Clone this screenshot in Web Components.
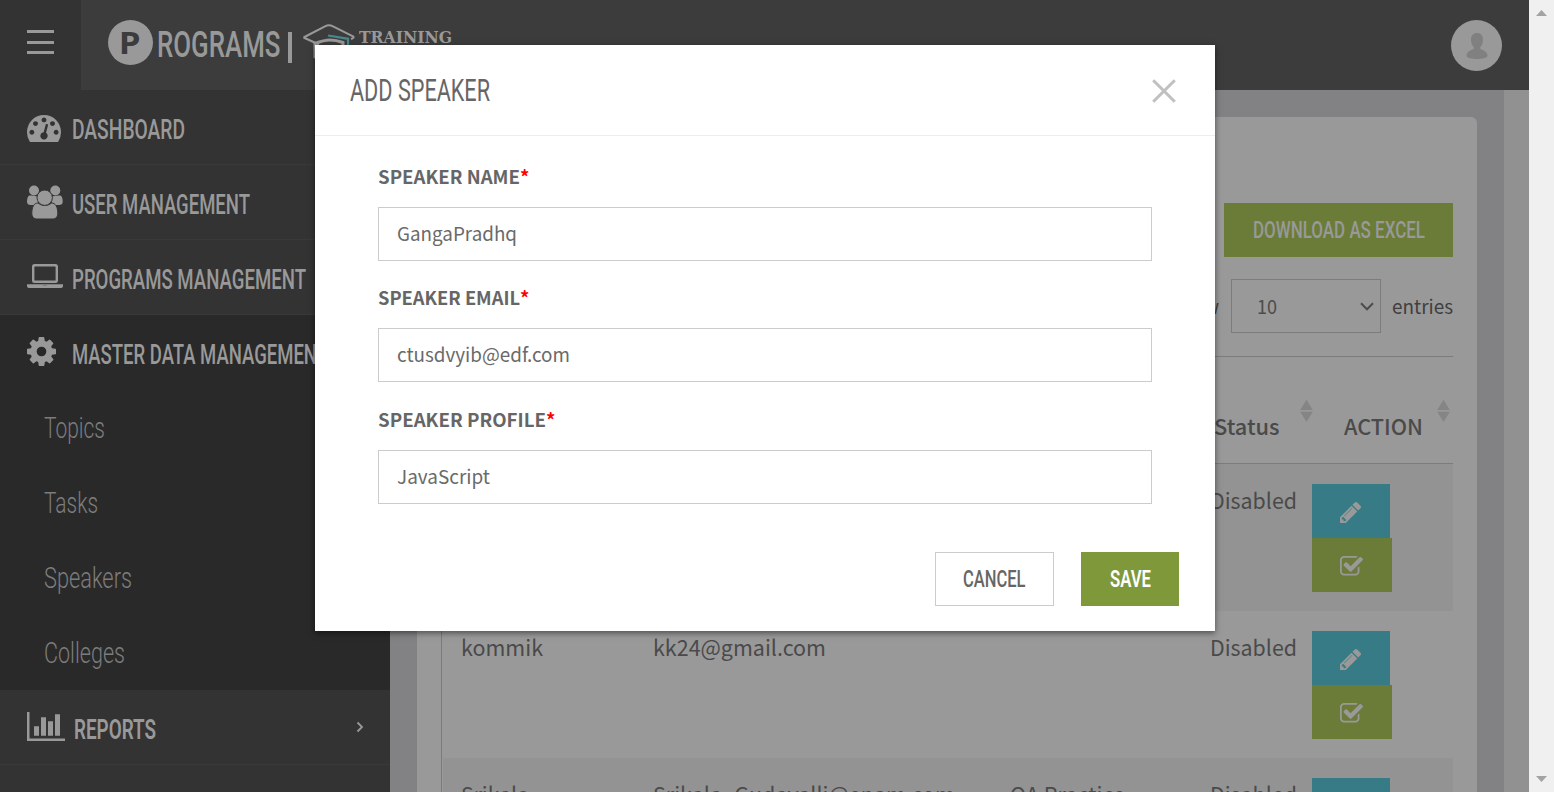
<!DOCTYPE html>
<html lang="en">
<head>
<meta charset="utf-8">
<title>Programs | Speakers</title>
<style>
html,body{margin:0;height:100%;overflow:hidden;background:#828284}
body{font-family:"Noto Sans CJK SC","Open Sans",sans-serif;color:#4a4a4a}
</style>
</head>
<body>
<programs-app></programs-app>
<script>
const define=(name,html,init)=>{
  const t=document.createElement('template');t.innerHTML=html;
  customElements.define(name,class extends HTMLElement{
    constructor(){super();this.attachShadow({mode:'open'}).append(t.content.cloneNode(true));}
    connectedCallback(){if(init)init(this,this.shadowRoot);}
  });
};
const COG='M1152 896q0-106-75-181t-181-75-181 75-75 181 75 181 181 75 181-75 75-181zm512-109v222q0 12-8 23t-20 13l-185 28q-19 54-39 91 35 50 107 138 10 12 10 25t-9 23q-27 37-99 108t-94 71q-12 0-26-9l-138-108q-44 23-91 38-16 136-29 186-7 28-36 28h-222q-14 0-24.5-8.5t-11.5-21.5l-28-184q-49-16-90-37l-141 107q-10 9-25 9-14 0-25-11-126-114-165-168-7-10-7-23 0-12 8-23 15-21 51-66.5t54-70.5q-27-50-41-99l-183-27q-13-2-21-12.5t-8-23.5v-222q0-12 8-23t19-13l186-28q14-46 39-92-40-57-107-138-10-12-10-24 0-10 9-23 26-36 98.5-107.5t94.5-71.5q13 0 26 10l138 107q44-23 91-38 16-136 29-186 7-28 36-28h222q14 0 24.5 8.5t11.5 21.5l28 184q49 16 90 37l142-107q9-9 24-9 13 0 25 10 129 119 165 170 7 8 7 22 0 12-8 23-15 21-51 66.5t-54 70.5q26 50 41 98l183 28q13 2 21 12.5t8 23.5z';
const DASH='M384 1152q0-53-37.5-90.5t-90.5-37.5-90.5 37.5-37.5 90.5 37.5 90.5 90.5 37.5 90.5-37.5 37.5-90.5zm192-448q0-53-37.5-90.5t-90.5-37.5-90.5 37.5-37.5 90.5 37.5 90.5 90.5 37.5 90.5-37.5 37.5-90.5zm428 481l101-382q6-26-7.5-48.5t-38.5-29.5-48 6.5-30 39.5l-101 382q-60 5-107 43.5t-63 98.5q-20 77 20 146t117 89 146-20 89-117q16-60-6-117t-72-91zm660-33q0-53-37.5-90.5t-90.5-37.5-90.5 37.5-37.5 90.5 37.5 90.5 90.5 37.5 90.5-37.5 37.5-90.5zm-640-640q0-53-37.5-90.5t-90.5-37.5-90.5 37.5-37.5 90.5 37.5 90.5 90.5 37.5 90.5-37.5 37.5-90.5zm448 192q0-53-37.5-90.5t-90.5-37.5-90.5 37.5-37.5 90.5 37.5 90.5 90.5 37.5 90.5-37.5 37.5-90.5zm320 448q0 261-141 483-19 29-54 29h-1402q-35 0-54-29-141-221-141-483 0-182 71-348t191-286 286-191 348-71 348 71 286 191 191 286 71 348z';
const PENCIL='M491 1536l91-91-235-235-91 91v107h128v128h107zm523-928q0-22-22-22-10 0-17 7l-542 542q-7 7-7 17 0 22 22 22 10 0 17-7l542-542q7-7 7-17zm-54-192l416 416-832 832h-416v-416zm683 96q0 53-37 90l-166 166-416-416 166-165q36-38 90-38 53 0 91 38l235 234q37 39 37 91z';
const CHECK='M1472 930v318q0 119-84.5 203.5t-203.5 84.5h-832q-119 0-203.5-84.5t-84.5-203.5v-832q0-119 84.5-203.5t203.5-84.5h832q63 0 117 25 15 7 18 23 3 17-9 29l-49 49q-10 10-23 10-3 0-9-2-23-6-45-6h-832q-66 0-113 47t-47 113v832q0 66 47 113t113 47h832q66 0 113-47t47-113v-254q0-13 9-22l64-64q10-10 23-10 6 0 12 3 20 8 20 29zm231-489l-814 814q-24 24-57 24t-57-24l-430-430q-24-24-24-57t24-57l110-110q24-24 57-24t57 24l263 263 647-647q24-24 57-24t57 24l110 110q24 24 24 57t-24 57z';
// name: [width, height, viewBox, content]
const ICONS={
  dashboard:[34,27,'0 256 1792 1408',`<path d="${DASH}"/>`],
  users:[36,34,'0 0 36 34','<circle cx="7" cy="5.5" r="5"/><circle cx="28.3" cy="5.5" r="5"/><path d="M3 10.500C1 10.500 0 13 0 17c0 2 1.500 3 3.500 3H11V11.500C9 11.500 8 10.500 3 10.500zM32.700 10.500c2 0 3 2.500 3 6.500 0 2-1.500 3-3.500 3H25V11.500c2 0 3-1 7.700-1z"/><path d="M11 18c-4 0-6.200 4-6.200 10.500 0 3.500 2 5.500 5 5.500h16c3 0 5-2 5-5.500C30.800 22 28.500 18 24.500 18c-2 1.600-4 2.400-6.700 2.400S13 19.600 11 18z" stroke="#333" stroke-width="1"/><circle cx="17.700" cy="12.700" r="7.700" stroke="#333" stroke-width="1"/>'],
  laptop:[36,24,'0 0 36 24','<path fill-rule="evenodd" d="M7.500 0h21Q31 0 31 2.500v14q0 2.500-2.500 2.500h-21Q5 19 5 16.500v-14Q5 0 7.500 0zM8 2.500q-.6 0-.6.600v12.800q0 .6.6.600h20q.6 0 .6-.6V3.100q0-.6-.6-.6z"/><path d="M0 20.300h36v1.700q0 2-3 2H3q-3 0-3-2z"/><path d="M16 21.200h4v.8h-4z" fill="#777"/>'],
  cog:[29,29,'128 128 1536 1536',`<path d="${COG}"/>`],
  chart:[38,29,'0 0 38 29','<path d="M0 0h2.500v26.400H38V29H0zM7 14.300h5v9.500H7zM14 5.300h5v18.500h-5zM21 9.300h5v14.500h-5zM28 2.300h5v21.500h-5z"/>'],
  pencil:[21,21,'128 149 1515 1515',`<path d="${PENCIL}"/>`],
  check:[23,19.500,'64 128 1663 1408',`<path d="${CHECK}"/>`],
  chevron:[8,12,'0 0 8 12','<path d="M1.500 1.500 6 6l-4.500 4.500" fill="none" stroke="currentColor" stroke-width="1.800"/>'],
  down:[14,9,'0 0 14 9','<path d="M1 1.300 7 7.300l6-6" fill="none" stroke="currentColor" stroke-width="2"/>'],
  close:[24,24,'0 0 24 24','<path d="M1.200 1.200 22.800 22.800M22.800 1.200 1.200 22.800" fill="none" stroke="currentColor" stroke-width="3"/>'],
  sort:[13,24,'0 0 13 24','<path d="M6.500.800 12.800 11H.2zM.2 12.800h12.600L6.500 23z"/>'],
  up:[11,6,'0 0 11 6','<path d="M0 6 5.500 0 11 6z"/>'],
  tri:[11,6,'0 0 11 6','<path d="M0 0h11L5.500 6z"/>'],
  person:[22,26,'0 0 22 26','<path d="M11 0c3.800 0 6 2.600 6 6.500 0 3-1 6-2.700 7.700v1.600c.4 1.200 7.200 1.800 7.200 7C21.500 25 16 26 11 26S.5 25 .5 22.800c0-5.200 6.800-5.800 7.200-7v-1.600C6 12.500 5 9.500 5 6.500 5 2.600 7.200 0 11 0z"/>'],
  cap:[54,40,'0 0 54 40','<path d="M1.500 13.500 23 2.300q4-2 8 0L51 12.300q1.500 1-.5 2L49 15.200M1.500 13.500 17 20.500" fill="none" stroke="#999" stroke-width="2" stroke-linejoin="round"/><path d="M13 18.500V33q14 9 28 0V18.500q-7-2.500-13-2.500t-15 3.500z" fill="none" stroke="#999" stroke-width="3"/><path d="M26 11.500 46 14.800V30" fill="none" stroke="#4a878c" stroke-width="2.200"/>']
};
define('ui-icon','<style>:host{display:block;flex:none}svg{display:block;fill:currentColor;overflow:visible}</style><svg></svg>',(h,r)=>{
  const [w,ht,vb,c]=ICONS[h.getAttribute('name')],s=r.querySelector('svg');
  s.setAttribute('width',w);s.setAttribute('height',ht);s.setAttribute('viewBox',vb);s.setAttribute('preserveAspectRatio','none');s.innerHTML=c;
});
// Text set to a given advance width: w; optional size and weight
define('fit-text','<style>:host{display:block;flex:none;white-space:nowrap}:host([face=head]){font-family:Roboto,sans-serif}span{display:inline-block;transform-origin:0 50%}</style><span><slot></slot></span>',(h,r)=>{
  const w=+h.getAttribute('w'),s=r.querySelector('span');
  if(h.getAttribute('size'))h.style.fontSize=h.getAttribute('size')+'px';
  if(h.getAttribute('weight'))h.style.fontWeight=h.getAttribute('weight');
  h.style.width=w+'px';
  s.style.transform=`scaleX(${w/s.getBoundingClientRect().width})`;
});
define('nav-item',`<style>
:host{display:flex;box-sizing:border-box;height:75px;padding:6px 26px 0 27px;align-items:center;border-bottom:1px solid #393939;background:#333;color:#999;line-height:40px}
.i{width:45px;flex:none;margin-top:-3px}:host([wide]) .i{width:46.500px}.c{margin-left:auto;margin-top:-6px}
</style><div class="i"><slot name="icon"></slot></div><slot></slot><div class="c"><slot name="end"></slot></div>`);
define('sub-item',`<style>:host{display:flex;box-sizing:border-box;height:75px;padding:0 0 2px 44px;align-items:center;color:#7c7c7c;line-height:40px}</style><slot></slot>`);
define('side-nav',`<style>
:host{display:block;width:390px;background:#333;overflow:hidden}
.open{background:#292929}
.open nav-item{background:#292929;border-color:#292929}
.sub{padding-top:1px;height:299px}
</style>
<nav-item><ui-icon slot="icon" name="dashboard"></ui-icon><fit-text face="head" w="113" size="27" weight="500">DASHBOARD</fit-text></nav-item>
<nav-item><ui-icon slot="icon" name="users" style="margin-top:-4px"></ui-icon><fit-text face="head" w="178" size="27" weight="500">USER MANAGEMENT</fit-text></nav-item>
<nav-item><ui-icon slot="icon" name="laptop" style="margin-top:-5px"></ui-icon><fit-text face="head" w="234" size="27" weight="500">PROGRAMS MANAGEMENT</fit-text></nav-item>
<div class="open">
<nav-item><ui-icon slot="icon" name="cog" style="margin-top:-4px"></ui-icon><fit-text face="head" w="256" size="27" weight="500">MASTER DATA MANAGEMENT</fit-text></nav-item>
<div class="sub">
<sub-item><fit-text face="head" w="61" size="30" weight="350">Topics</fit-text></sub-item>
<sub-item><fit-text face="head" w="54" size="30" weight="350">Tasks</fit-text></sub-item>
<sub-item><fit-text face="head" w="88" size="30" weight="350">Speakers</fit-text></sub-item>
<sub-item><fit-text face="head" w="81" size="30" weight="350">Colleges</fit-text></sub-item>
</div></div>
<nav-item wide><ui-icon slot="icon" name="chart" style="margin-top:-4px"></ui-icon><fit-text face="head" w="82" size="27" weight="600">REPORTS</fit-text><ui-icon slot="end" name="chevron"></ui-icon></nav-item>`);
define('top-bar',`<style>
:host{display:flex;height:90px;background:#3c3c3c;color:#999}
.menu{width:81px;height:60px;padding-top:30px;background:#333;display:flex;flex-direction:column;gap:7.500px}
.menu i{display:block;width:27px;height:3px;margin-left:27px;background:#999}
.logo{display:flex;align-items:flex-start;padding:20px 0 0 26.500px}
.p{width:45px;height:45px;border-radius:50%;background:#999;color:#3c3c3c;display:flex;justify-content:center;font:700 31px/44px "Open Sans",sans-serif}
.p span{transform:scaleX(1.12)}
.r{margin:4px 0 0 4px;line-height:42px}
.bar{width:4px;height:31px;background:#999;margin:12px 0 0 8px}
.cap{margin:4px 0 0 9.500px}
.t{margin:6px 0 0 3.500px;font-family:"DejaVu Serif",serif;line-height:24px}
.av{margin:20px 27px 0 auto;width:51px;height:51px;border-radius:50%;background:#999;color:#808080;display:flex;justify-content:center;align-items:center}
</style>
<div class="menu"><i></i><i></i><i></i></div>
<div class="logo"><div class="p"><span>P</span></div><fit-text class="r" face="head" w="123.500" size="37" weight="500">ROGRAMS</fit-text><div class="bar"></div><ui-icon class="cap" name="cap"></ui-icon><fit-text class="t" w="93" size="16" weight="700">TRAINING</fit-text></div>
<div class="av"><ui-icon name="person"></ui-icon></div>`);
define('row-actions',`<style>:host{display:block;width:141px;padding-top:20px;color:#999}div{height:54px;display:flex;align-items:center;padding:3px 0 0 28px;box-sizing:border-box}.e{width:78px;background:#367b86}.c{width:80px;padding-top:1px;background:#6b7c39}</style>
<div class="e"><ui-icon name="pencil"></ui-icon></div><div class="c"><ui-icon name="check"></ui-icon></div>`);
define('table-row',`<style>:host{display:grid;grid-template-columns:192px 357px 200px 102px 141px;height:147px;padding-left:18px;line-height:36px;font-size:21.800px}
:host([odd]){background:#939393}.x{padding-top:18px}</style>
<div class="x"><slot name="a"></slot></div><div class="x"><slot name="b"></slot></div><div class="x"><slot name="c"></slot></div><div class="x"><slot name="d"></slot></div><row-actions></row-actions>`);
define('speakers-table',`<style>
:host{display:block;margin-left:24px;border-left:1px solid #7b7b7b;padding-left:1px;width:1010px}
.head{display:grid;grid-template-columns:869px 141px;height:106px;border-top:1px solid #7c7c7c;border-bottom:1px solid #7c7c7c;line-height:36px;color:#4a4a4a}
.head div{display:flex;align-items:flex-start}
.head fit-text{margin-top:51px}.head ui-icon{margin:42px 3.500px 0 auto;color:#858585}
.s{padding-left:771px}.act{padding-left:31.500px}.s ui-icon{margin-right:-1px}
</style>
<div class="head"><div class="s"><fit-text w="65.500" size="21.800" weight="500">Status</fit-text><ui-icon name="sort"></ui-icon></div><div class="act"><fit-text w="79" size="21.800" weight="500">ACTION</fit-text><ui-icon name="sort"></ui-icon></div></div>
<table-row odd><fit-text slot="d" w="87">Disabled</fit-text></table-row>
<table-row><fit-text slot="a" w="82">kommik</fit-text><fit-text slot="b" w="173">kk24@gmail.com</fit-text><fit-text slot="d" w="87">Disabled</fit-text></table-row>
<table-row odd><fit-text slot="a" w="68">Srikala</fit-text><fit-text slot="b" w="302">Srikala_Gudavalli@epam.com</fit-text><fit-text slot="c" w="115">QA Practice</fit-text><fit-text slot="d" w="87">Disabled</fit-text></table-row>`);
define('page-card',`<style>
:host{display:block;width:1060px;height:800px;background:#999;border-radius:6px 6px 0 0}
.tools{display:flex;flex-direction:column;align-items:flex-end;padding:86px 24px 0 0;height:153px}
.dl{width:229px;height:54px;display:flex;align-items:center;justify-content:center;background:#6b7c39;color:#999;line-height:40px}
.show{display:flex;align-items:center;margin-top:22px;color:#3f3f3f}
.sel{box-sizing:border-box;width:150px;height:54px;border:1px solid #7c7c7c;margin:0 11px 0 12px;padding:0 6px 0 25px;display:flex;align-items:center;justify-content:space-between;color:#4d4d4d}
</style>
<div class="tools"><div class="dl"><fit-text face="head" w="172" size="24" weight="500">DOWNLOAD AS EXCEL</fit-text></div>
<div class="show"><fit-text w="49" size="19.100">Show</fit-text><div class="sel"><fit-text w="20" size="19.100">10</fit-text><ui-icon name="down"></ui-icon></div><fit-text w="61" size="19.100">entries</fit-text></div></div>
<speakers-table></speakers-table>`);
define('scroll-rail',`<style>:host{display:flex;flex-direction:column;justify-content:space-between;align-items:center;width:25px;box-sizing:border-box;padding:10px 0;background:#f0f0f0;color:#a3a3a3}</style><ui-icon name="up"></ui-icon><ui-icon name="tri"></ui-icon>`);
define('form-field',`<style>:host{display:block;height:121.400px}
.l{display:flex;height:30px;line-height:30px;font-size:18.500px;font-weight:700;color:#666}
.l span{color:#f00}
.in{box-sizing:border-box;height:54px;margin-top:16px;border:1px solid #ccc;padding:0 0 2px 18px;display:flex;align-items:center;font-size:19.100px;line-height:30px;color:#6a6a6a}</style>
<div class="l"><slot name="label"></slot><span>*</span></div><div class="in"><slot></slot></div>`);
define('modal-dialog',`<style>
:host{display:block;position:absolute;left:315px;top:45px;width:900px;height:586px;background:#fff;box-shadow:0 2px 6px rgba(0,0,0,.5);color:#666}
header{display:flex;justify-content:space-between;align-items:center;height:90px;padding:0 39px 0 35px;border-bottom:1px solid #ededed;line-height:50px}
header fit-text{margin-top:2px}
header ui-icon{color:#c0c0c0;margin-top:1px}
main{padding:25px 63px 0;height:372px;box-sizing:content-box}
footer{display:flex;justify-content:flex-end;gap:27px;padding-right:36px;margin-top:19px;line-height:40px}
footer div{box-sizing:border-box;height:54px;display:flex;align-items:center;justify-content:center}
.c{width:119px;border:1px solid #ccc}.s{width:98px;background:#7f983a;color:#fff}
</style>
<header><fit-text face="head" w="140" size="31" weight="450">ADD SPEAKER</fit-text><ui-icon name="close"></ui-icon></header>
<main>
<form-field><fit-text slot="label" w="142">SPEAKER NAME</fit-text><fit-text w="120">GangaPradhq</fit-text></form-field>
<form-field><fit-text slot="label" w="142">SPEAKER EMAIL</fit-text><fit-text w="173">ctusdvyib@edf.com</fit-text></form-field>
<form-field><fit-text slot="label" w="168">SPEAKER PROFILE</fit-text><fit-text w="93">JavaScript</fit-text></form-field>
</main>
<footer><div class="c"><fit-text face="head" w="62.500" size="24" weight="500">CANCEL</fit-text></div><div class="s"><fit-text face="head" w="41" size="24" weight="600">SAVE</fit-text></div></footer>`);
define('programs-app',`<style>
:host{display:flex;position:relative;width:1554px;height:792px;overflow:hidden}
.page{width:1529px;display:flex;flex-direction:column}
.body{display:flex;height:702px;overflow:hidden}
.main{width:1114px;background:#828284;padding:27px 0 0 27px;box-sizing:border-box}
.gutter{flex:1;background:#919191}
</style>
<div class="page"><top-bar></top-bar><div class="body"><side-nav></side-nav><div class="main"><page-card></page-card></div><div class="gutter"></div></div></div>
<scroll-rail></scroll-rail><modal-dialog></modal-dialog>`);
</script>
</body>
</html>
